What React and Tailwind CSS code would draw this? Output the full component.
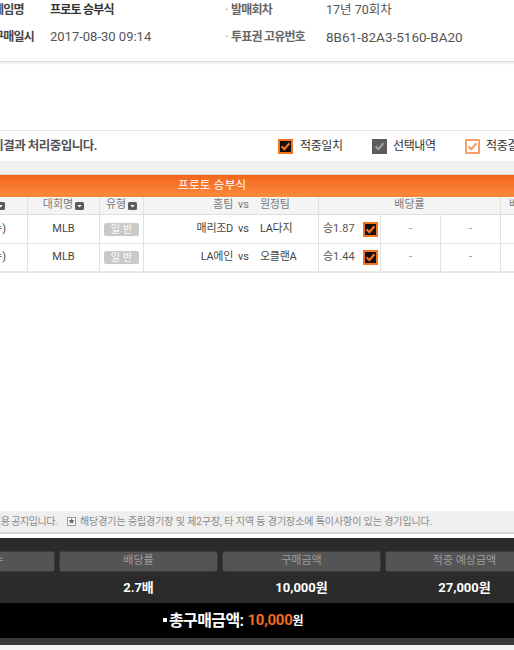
import React from 'react'

const FONT = "font-['Roboto','Noto_Sans_CJK_KR',sans-serif]"

function CheckBox({ kind }) {
    // hit: 적중일치, sel: 선택내역, res: 적중결과
    const styles = {
        hit: { fill: '#111', stroke: '#f47321', check: '#f47321' },
        sel: { fill: '#5d5d5d', stroke: '#5d5d5d', check: '#a0a0a0' },
        res: { fill: '#fff', stroke: '#f8a068', check: '#f8a068' },
    }
    const s = styles[kind]
    return (
        <svg width="15" height="15" viewBox="0 0 15 15" className="shrink-0">
            <rect x="1" y="1" width="13" height="13" fill={s.fill} stroke={s.stroke} strokeWidth="2" />
            <path d="M3.6 7.4 L6.4 10.2 L11.4 4.3" fill="none" stroke={s.check} strokeWidth="2.2" />
        </svg>
    )
}

function SortIcon() {
    return (
        <svg width="9" height="8" viewBox="0 0 9 8" className="ml-[2px] shrink-0">
            <rect width="9" height="8" rx="1.5" fill="#5a5a5a" />
            <path d="M2.3 3 L6.7 3 L4.5 5.6 Z" fill="#fff" />
        </svg>
    )
}

function Cell({ w, children, className = '' }) {
    return (
        <div className={`${w} h-full flex items-center justify-center border-r border-[#e2e2e2] shrink-0 ${className}`}>
            {children}
        </div>
    )
}

function Teams({ home, away, head }) {
    return (
        <div className={`flex items-center w-full ${head ? 'text-[#7a7a7a]' : 'text-[#444]'}`}>
            <span className="w-[89px] text-right tracking-[-0.3px]">{home}</span>
            <span className="ml-[5px] w-[14px]">vs</span>
            <span className="ml-[8px] tracking-[-0.3px]">{away}</span>
        </div>
    )
}

const games = [
    { date: '08-30(수)', home: '매리조D', away: 'LA다지', odds: '승1.87' },
    { date: '08-30(수)', home: 'LA에인', away: '오클랜A', odds: '승1.44' },
]

export default function App() {
    return (
        <div className={`w-[514px] h-[650px] overflow-hidden bg-white flex flex-col ${FONT}`}>
            {/* 상단 정보 */}
            <div className="h-[61px] flex flex-col gap-[7px]">
                <div className="flex items-center h-[20px]">
                    <span className="-ml-[7px] w-[57px] text-[12px] font-bold text-[#444] tracking-[-0.8px] shrink-0 whitespace-nowrap">게임명</span>
                    <span className="w-[175px] text-[12px] font-bold text-[#333] tracking-[-0.8px] shrink-0">프로토 승부식</span>
                    <span className="text-[#999] text-[14px] w-[6px] shrink-0">·</span>
                    <span className="w-[95px] text-[12px] font-bold text-[#666] tracking-[-0.8px] shrink-0">발매회차</span>
                    <span className="text-[12.5px] text-[#555]">17년 70회차</span>
                </div>
                <div className="flex items-center h-[20px]">
                    <span className="-ml-[7px] w-[57px] text-[12px] font-bold text-[#444] tracking-[-0.8px] shrink-0 whitespace-nowrap">구매일시</span>
                    <span className="w-[175px] text-[13px] text-[#555] shrink-0">2017-08-30 09:14</span>
                    <span className="text-[#999] text-[14px] w-[6px] shrink-0">·</span>
                    <span className="w-[95px] text-[12px] font-bold text-[#666] tracking-[-0.8px] shrink-0">투표권 고유번호</span>
                    <span className="text-[13.5px] text-[#555]">8B61-82A3-5160-BA20</span>
                </div>
            </div>
            <div className="h-[1px] bg-[#dcdcdc]"></div>
            <div className="h-[3px] bg-linear-to-b from-[#ececec] to-white"></div>

            <div className="h-[65px]"></div>

            {/* 결과 안내 + 범례 */}
            <div className="border-t border-[#e3e3e3] h-[31px] flex items-center">
                <div className="w-[97px] flex justify-end shrink-0">
                    <span className="whitespace-nowrap text-[12.5px] font-bold text-[#555] tracking-[-0.5px]">경기결과 처리중입니다.</span>
                </div>
                <div className="flex items-center ml-[181px] text-[12px] text-[#333] tracking-[-0.4px] whitespace-nowrap">
                    <CheckBox kind="hit" />
                    <span className="ml-[7px] w-[72px]">적중일치</span>
                    <CheckBox kind="sel" />
                    <span className="ml-[6px] w-[72px]">선택내역</span>
                    <CheckBox kind="res" />
                    <span className="ml-[6px]">적중결과</span>
                </div>
            </div>
            <div className="h-[14px] bg-[#f1f1f1] border-b border-[#dadada]"></div>

            {/* 테이블 */}
            <div className="h-[22px] bg-linear-to-b from-[#f1661a] to-[#fc8a3c] flex items-center">
                <span className="ml-[178px] text-[11.5px] text-white tracking-[0.3px]">프로토 승부식</span>
            </div>
            <div className="h-[18px] bg-[#f4f4f4] border-b border-[#dedede] flex text-[11px] text-[#7a7a7a]">
                <Cell w="w-[28px]" className="justify-end! pr-[22px]">
                    <span className="flex items-center whitespace-nowrap">경기일시<SortIcon /></span>
                </Cell>
                <Cell w="w-[72px]"><span className="flex items-center">대회명<SortIcon /></span></Cell>
                <Cell w="w-[44px]"><span className="flex items-center">유형<SortIcon /></span></Cell>
                <Cell w="w-[175px]"><Teams head home="홈팀" away="원정팀" /></Cell>
                <Cell w="w-[182px]">배당률</Cell>
                <div className="flex-1 flex items-center pl-[8px] whitespace-nowrap">배당결과</div>
            </div>
            {games.map((g, i) => (
                <div key={i} className={`h-[29px] flex text-[11px] ${i === games.length - 1 ? 'border-b-2 border-[#e8e8e8]' : 'border-b border-[#e6e6e6]'}`}>
                    <Cell w="w-[28px]" className="justify-end! pr-[21px] text-[#444]">
                        <span className="whitespace-nowrap">{g.date}</span>
                    </Cell>
                    <Cell w="w-[72px]" className="text-[#444]">MLB</Cell>
                    <Cell w="w-[44px]">
                        <span className="w-[35px] h-[13px] rounded-[2px] bg-[#c9c9c9] text-white text-[10px] flex items-center justify-center tracking-[3px] pl-[3px]">일반</span>
                    </Cell>
                    <Cell w="w-[175px]"><Teams home={g.home} away={g.away} /></Cell>
                    <Cell w="w-[62px]" className="justify-start! pl-[4px] text-[#555]">
                        <span className="w-[40px]">{g.odds}</span>
                        <CheckBox kind="hit" />
                    </Cell>
                    <Cell w="w-[60px]" className="text-[#888]">-</Cell>
                    <Cell w="w-[60px]" className="text-[#888]">-</Cell>
                    <div className="flex-1"></div>
                </div>
            ))}

            <div className="flex-1"></div>

            {/* 공지 */}
            <div className="h-[23px] bg-[#efefef] border-b-2 border-[#d4d4d4] flex items-center text-[10px] text-[#8a8a8a] tracking-[-0.1px] whitespace-nowrap">
                <div className="w-[57px] flex justify-end shrink-0">
                    <span className="tracking-[-0.5px]">※ 상기 내용은 참고용 공지입니다.</span>
                </div>
                <span className="ml-[10px] w-[9px] h-[9px] border border-[#999] bg-white text-[7px] leading-none flex items-center justify-center text-[#666] shrink-0">★</span>
                <span className="ml-[4px]">해당경기는 중립경기장 및 제2구장, 타 지역 등 경기장소에 특이사항이 있는 경기입니다.</span>
            </div>
            <div className="h-[4px] bg-white"></div>

            {/* 구매 요약 */}
            <div className="h-[65px] bg-[#2b2b2b] pt-[13px]">
                <div className="flex gap-[4px] -ml-[104px] h-[21px]">
                    {['예상 적중 수', '배당률', '구매금액', '적중 예상금액'].map(t => (
                        <div key={t} className="w-[159px] shrink-0 rounded-[3px] bg-[#545454] border border-[#3c3c3c] flex items-center justify-center text-[11px] text-[#9d9d9d]">{t}</div>
                    ))}
                </div>
                <div className="flex gap-[4px] -ml-[104px] h-[31px] items-center">
                    {['2경기', '2.7배', '10,000원', '27,000원'].map(t => (
                        <div key={t} className="w-[159px] shrink-0 text-center text-[13px] font-bold text-white">{t}</div>
                    ))}
                </div>
            </div>
            <div className="h-[35px] bg-black flex items-center">
                <span className="ml-[163px] w-[4px] h-[4px] bg-white mb-[2px]"></span>
                <span className="ml-[2px] text-[16px] font-bold text-white tracking-[-0.6px]">총구매금액:</span>
                <span className="ml-[4px] text-[15px] font-bold text-[#f26a21] tracking-[-0.3px]">10,000</span>
                <span className="text-[12px] font-bold text-white">원</span>
            </div>
            <div className="h-[7px] bg-[#383838]"></div>
            <div className="h-[5px] bg-[#f4f4f4]"></div>
        </div>
    )
}
